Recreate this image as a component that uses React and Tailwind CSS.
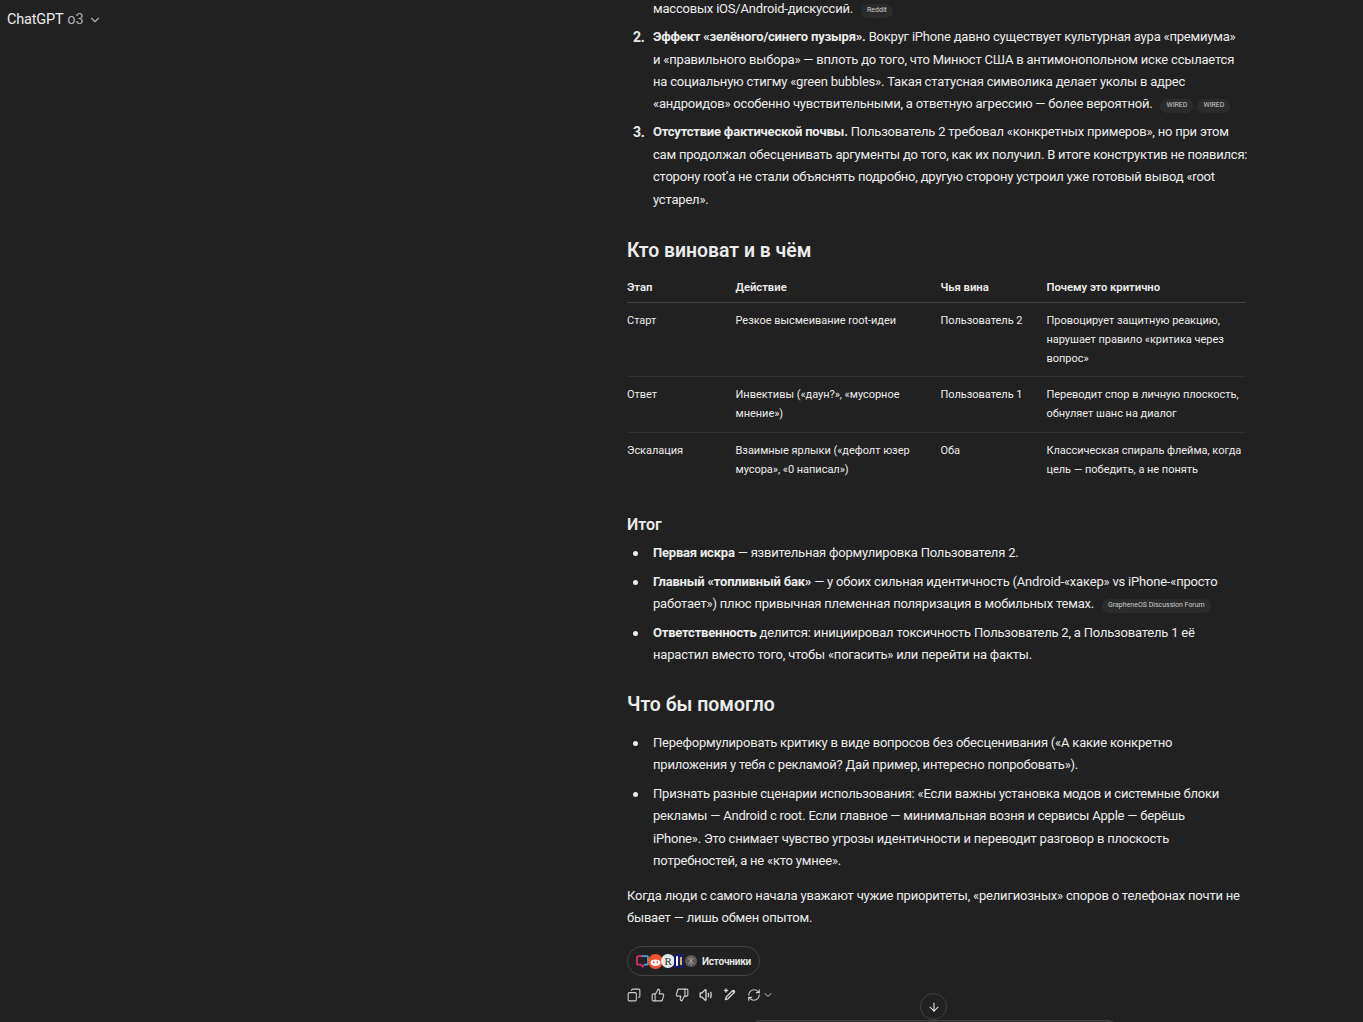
import React from "react";
import { Copy, ThumbsUp, ThumbsDown, RefreshCw, ChevronDown, ArrowDown } from "lucide-react";

const Chip = ({ children, tight }) => (
  <span className={`inline-flex items-center h-[14px] px-[6px] ${tight ? "ml-[4px]" : "ml-[8px]"} rounded-full bg-[#2b2b2b] text-[7px] leading-none tracking-normal text-[#cdcdcd] align-[1px] whitespace-nowrap`}>{children}</span>
);
const Row = ({ num, children }) => (
  <div className="relative pl-[26px] mt-[5.7px] leading-[22.4px] whitespace-nowrap">
    <span className="absolute left-[6px] top-0 font-bold text-[14px]">{num}</span>
    {children}
  </div>
);
const Bullet = ({ children }) => (
  <div className="relative pl-[26px] mt-[6.4px] leading-[22.4px] whitespace-nowrap">
    <span className="absolute left-[6px] top-[9px] w-[5px] h-[5px] rounded-full bg-[#ececec]" />
    {children}
  </div>
);
const cols = "grid grid-cols-[108.5px_205px_106px_199.5px]";
const Tr = ({ cells, last }) => (
  <div className={`${cols} pt-[9px] pb-[8px] leading-[18.8px] ${last ? "" : "border-b border-[#303030]"}`}>
    {cells.map((c, i) => <div key={i} className="whitespace-nowrap">{c}</div>)}
  </div>
);

export default function App() {
  return (
    <div className="relative h-[1022px] overflow-hidden bg-[#212121] text-[#ececec] text-[13px] tracking-[-0.2px]" style={{ fontFamily: 'Roboto, "Noto Sans", sans-serif' }}>
      <div className="absolute left-[7px] top-[10px] flex items-center text-[14.5px] leading-[20px]">
        <span>ChatGPT</span><span className="ml-[4px] text-[#afafaf] tracking-normal">o3</span>
        <ChevronDown size={14} className="ml-[4px] text-[#afafaf]" />
      </div>

      <div className="ml-[627px] w-[619px] -mt-[2px]">
        <div className="pl-[26px] leading-[22.4px] whitespace-nowrap">массовых iOS/Android-дискуссий.<Chip>Reddit</Chip></div>
        <Row num="2.">
          <b>Эффект «зелёного/синего пузыря».</b> Вокруг iPhone давно существует культурная аура «премиума»<br />
          и «правильного выбора» — вплоть до того, что Минюст США в антимонопольном иске ссылается<br />
          на социальную стигму «green bubbles». Такая статусная символика делает уколы в адрес<br />
          «андроидов» особенно чувствительными, а ответную агрессию — более вероятной.<Chip>WIRED</Chip><Chip tight>WIRED</Chip>
        </Row>
        <Row num="3.">
          <b>Отсутствие фактической почвы.</b> Пользователь 2 требовал «конкретных примеров», но при этом<br />
          сам продолжал обесценивать аргументы до того, как их получил. В итоге конструктив не появился:<br />
          сторону root’а не стали объяснять подробно, другую сторону устроил уже готовый вывод «root<br />
          устарел».
        </Row>

        <h2 className="mt-[28px] text-[19.4px] leading-[24px] font-semibold tracking-normal">Кто виноват и в чём</h2>

        <div className="mt-[15px] text-[11px] tracking-[-0.03px]">
          <div className={`${cols} pb-[5px] leading-[19px] text-[11.3px] font-semibold border-b border-[#424242]`}>
            <div>Этап</div><div>Действие</div><div>Чья вина</div><div>Почему это критично</div>
          </div>
          <Tr cells={["Старт", "Резкое высмеивание root-идеи", "Пользователь 2", <>Провоцирует защитную реакцию,<br />нарушает правило «критика через<br />вопрос»</>]} />
          <Tr cells={["Ответ", <>Инвективы («даун?», «мусорное<br />мнение»)</>, "Пользователь 1", <>Переводит спор в личную плоскость,<br />обнуляет шанс на диалог</>]} />
          <Tr last cells={["Эскалация", <>Взаимные ярлыки («дефолт юзер<br />мусора», «0 написал»)</>, "Оба", <>Классическая спираль флейма, когда<br />цель — победить, а не понять</>]} />
        </div>

        <h3 className="mt-[26px] text-[16px] leading-[22px] font-semibold tracking-normal">Итог</h3>
        <div className="mt-[1px]" />
        <Bullet><b>Первая искра</b> — язвительная формулировка Пользователя 2.</Bullet>
        <Bullet><b>Главный «топливный бак»</b> — у обоих сильная идентичность (Android-«хакер» vs iPhone-«просто<br />работает») плюс привычная племенная поляризация в мобильных темах.<Chip>GrapheneOS Discussion Forum</Chip></Bullet>
        <Bullet><b>Ответственность</b> делится: инициировал токсичность Пользователь 2, а Пользователь 1 её<br />нарастил вместо того, чтобы «погасить» или перейти на факты.</Bullet>

        <h2 className="mt-[26px] text-[19.4px] leading-[24px] font-semibold tracking-normal">Что бы помогло</h2>
        <div className="mt-[15px]" />
        <Bullet>Переформулировать критику в виде вопросов без обесценивания («А какие конкретно<br />приложения у тебя с рекламой? Дай пример, интересно попробовать»).</Bullet>
        <Bullet>Признать разные сценарии использования: «Если важны установка модов и системные блоки<br />рекламы — Android с root. Если главное — минимальная возня и сервисы Apple — берёшь<br />iPhone». Это снимает чувство угрозы идентичности и переводит разговор в плоскость<br />потребностей, а не «кто умнее».</Bullet>
        <p className="mt-[12px] leading-[22.4px] whitespace-nowrap">Когда люди с самого начала уважают чужие приоритеты, «религиозных» споров о телефонах почти не<br />бывает — лишь обмен опытом.</p>

        <div className="mt-[17px] inline-flex items-center h-[30px] w-[133px] pl-[8px] rounded-full border border-[#424242]">
          <div className="flex items-center">
            <svg width="13" height="13" viewBox="0 0 13 13" fill="none"><path d="M5 1.200h6a1 1 0 0 1 1 1v6.500a1 1 0 0 1-1 1H8" stroke="#4fa3d8" strokeWidth="1.700" /><path d="M6 1.200H2a1 1 0 0 0-1 1v6.500a1 1 0 0 0 1 1h3l1.500 2 1.500-2" stroke="#d5306f" strokeWidth="1.700" /></svg>
            <svg className="-ml-[1px]" width="15" height="15" viewBox="0 0 15 15"><circle cx="7.500" cy="7.500" r="7.500" fill="#f0532c" /><ellipse cx="7.500" cy="8.700" rx="5" ry="3.300" fill="#fff" /><circle cx="5.600" cy="8.200" r=".9" fill="#f0532c" /><circle cx="9.400" cy="8.200" r=".9" fill="#f0532c" /></svg>
            <span className="-ml-[2px] w-[14px] h-[14px] rounded-full bg-[#e8e8e8] text-[#333] text-[11px] leading-[14px] text-center" style={{ fontFamily: '"Liberation Serif", serif' }}>R</span>
            <span className="-ml-[1px] w-[10px] h-[14px] rounded-[3px] bg-[#14206e] relative">
              <span className="absolute left-[2px] top-[2px] w-[2px] h-[10px] rounded-full bg-white" />
              <span className="absolute left-[6px] top-[3px] w-[1.500px] h-[8px] bg-[#e8b04a]" />
            </span>
            <svg className="ml-[1px]" width="12" height="12" viewBox="0 0 12 12" fill="none"><circle cx="6" cy="6" r="6" fill="#5a5a5a" /><path d="M3 3l6 6M9 3L3 9M6 2v8" stroke="#aaa" strokeWidth=".8" /></svg>
          </div>
          <span className="ml-[5px] text-[10px] font-semibold text-[#ececec] whitespace-nowrap">Источники</span>
        </div>

        <div className="mt-[12px] flex items-center gap-[10px] text-[#cdcdcd]">
          <Copy size={14} strokeWidth={1.9} className="-scale-x-100" />
          <ThumbsUp size={14} strokeWidth={1.9} />
          <ThumbsDown size={14} strokeWidth={1.9} />
          <svg width="14" height="14" viewBox="0 0 14 14" fill="none" stroke="currentColor" strokeWidth="1.400" strokeLinecap="round" strokeLinejoin="round"><path d="M1.200 5h1.600L6.300 1.800c.3-.2.7 0 .7.400v9.600c0 .4-.4.600-.7.400L2.800 9H1.200z" /><path d="M9.300 5.300c.4 1.100.4 2.300 0 3.400" /><path d="M11.700 4.300c.6 1.700.6 3.700 0 5.400" /></svg>
          <svg width="14" height="14" viewBox="0 0 14 14" fill="none" stroke="currentColor" strokeWidth="1.400" strokeLinecap="round" strokeLinejoin="round"><path d="M9.500 2.800l1.700 1.700-6.300 6.300-2.500.8.800-2.500z" /><path d="M9.500 2.800c.5-.5 1.200-.5 1.700 0s.5 1.200 0 1.700" /><path d="M3 1v3M1.500 2.500h3" /></svg>
          <span className="flex items-center"><RefreshCw size={14} strokeWidth={1.9} /><ChevronDown size={12} strokeWidth={1.9} className="ml-[1px]" /></span>
        </div>
      </div>

      <div className="absolute left-[920px] top-[993px] w-[27px] h-[27px] rounded-full border border-[#424242] bg-[#212121] flex items-center justify-center">
        <ArrowDown size={14} strokeWidth={1.8} />
      </div>
      <div className="absolute left-[752px] top-[1020px] w-[364px] h-[8px] rounded-t-[8px] border-t border-[#424242] bg-[#303030]" />
    </div>
  );
}
